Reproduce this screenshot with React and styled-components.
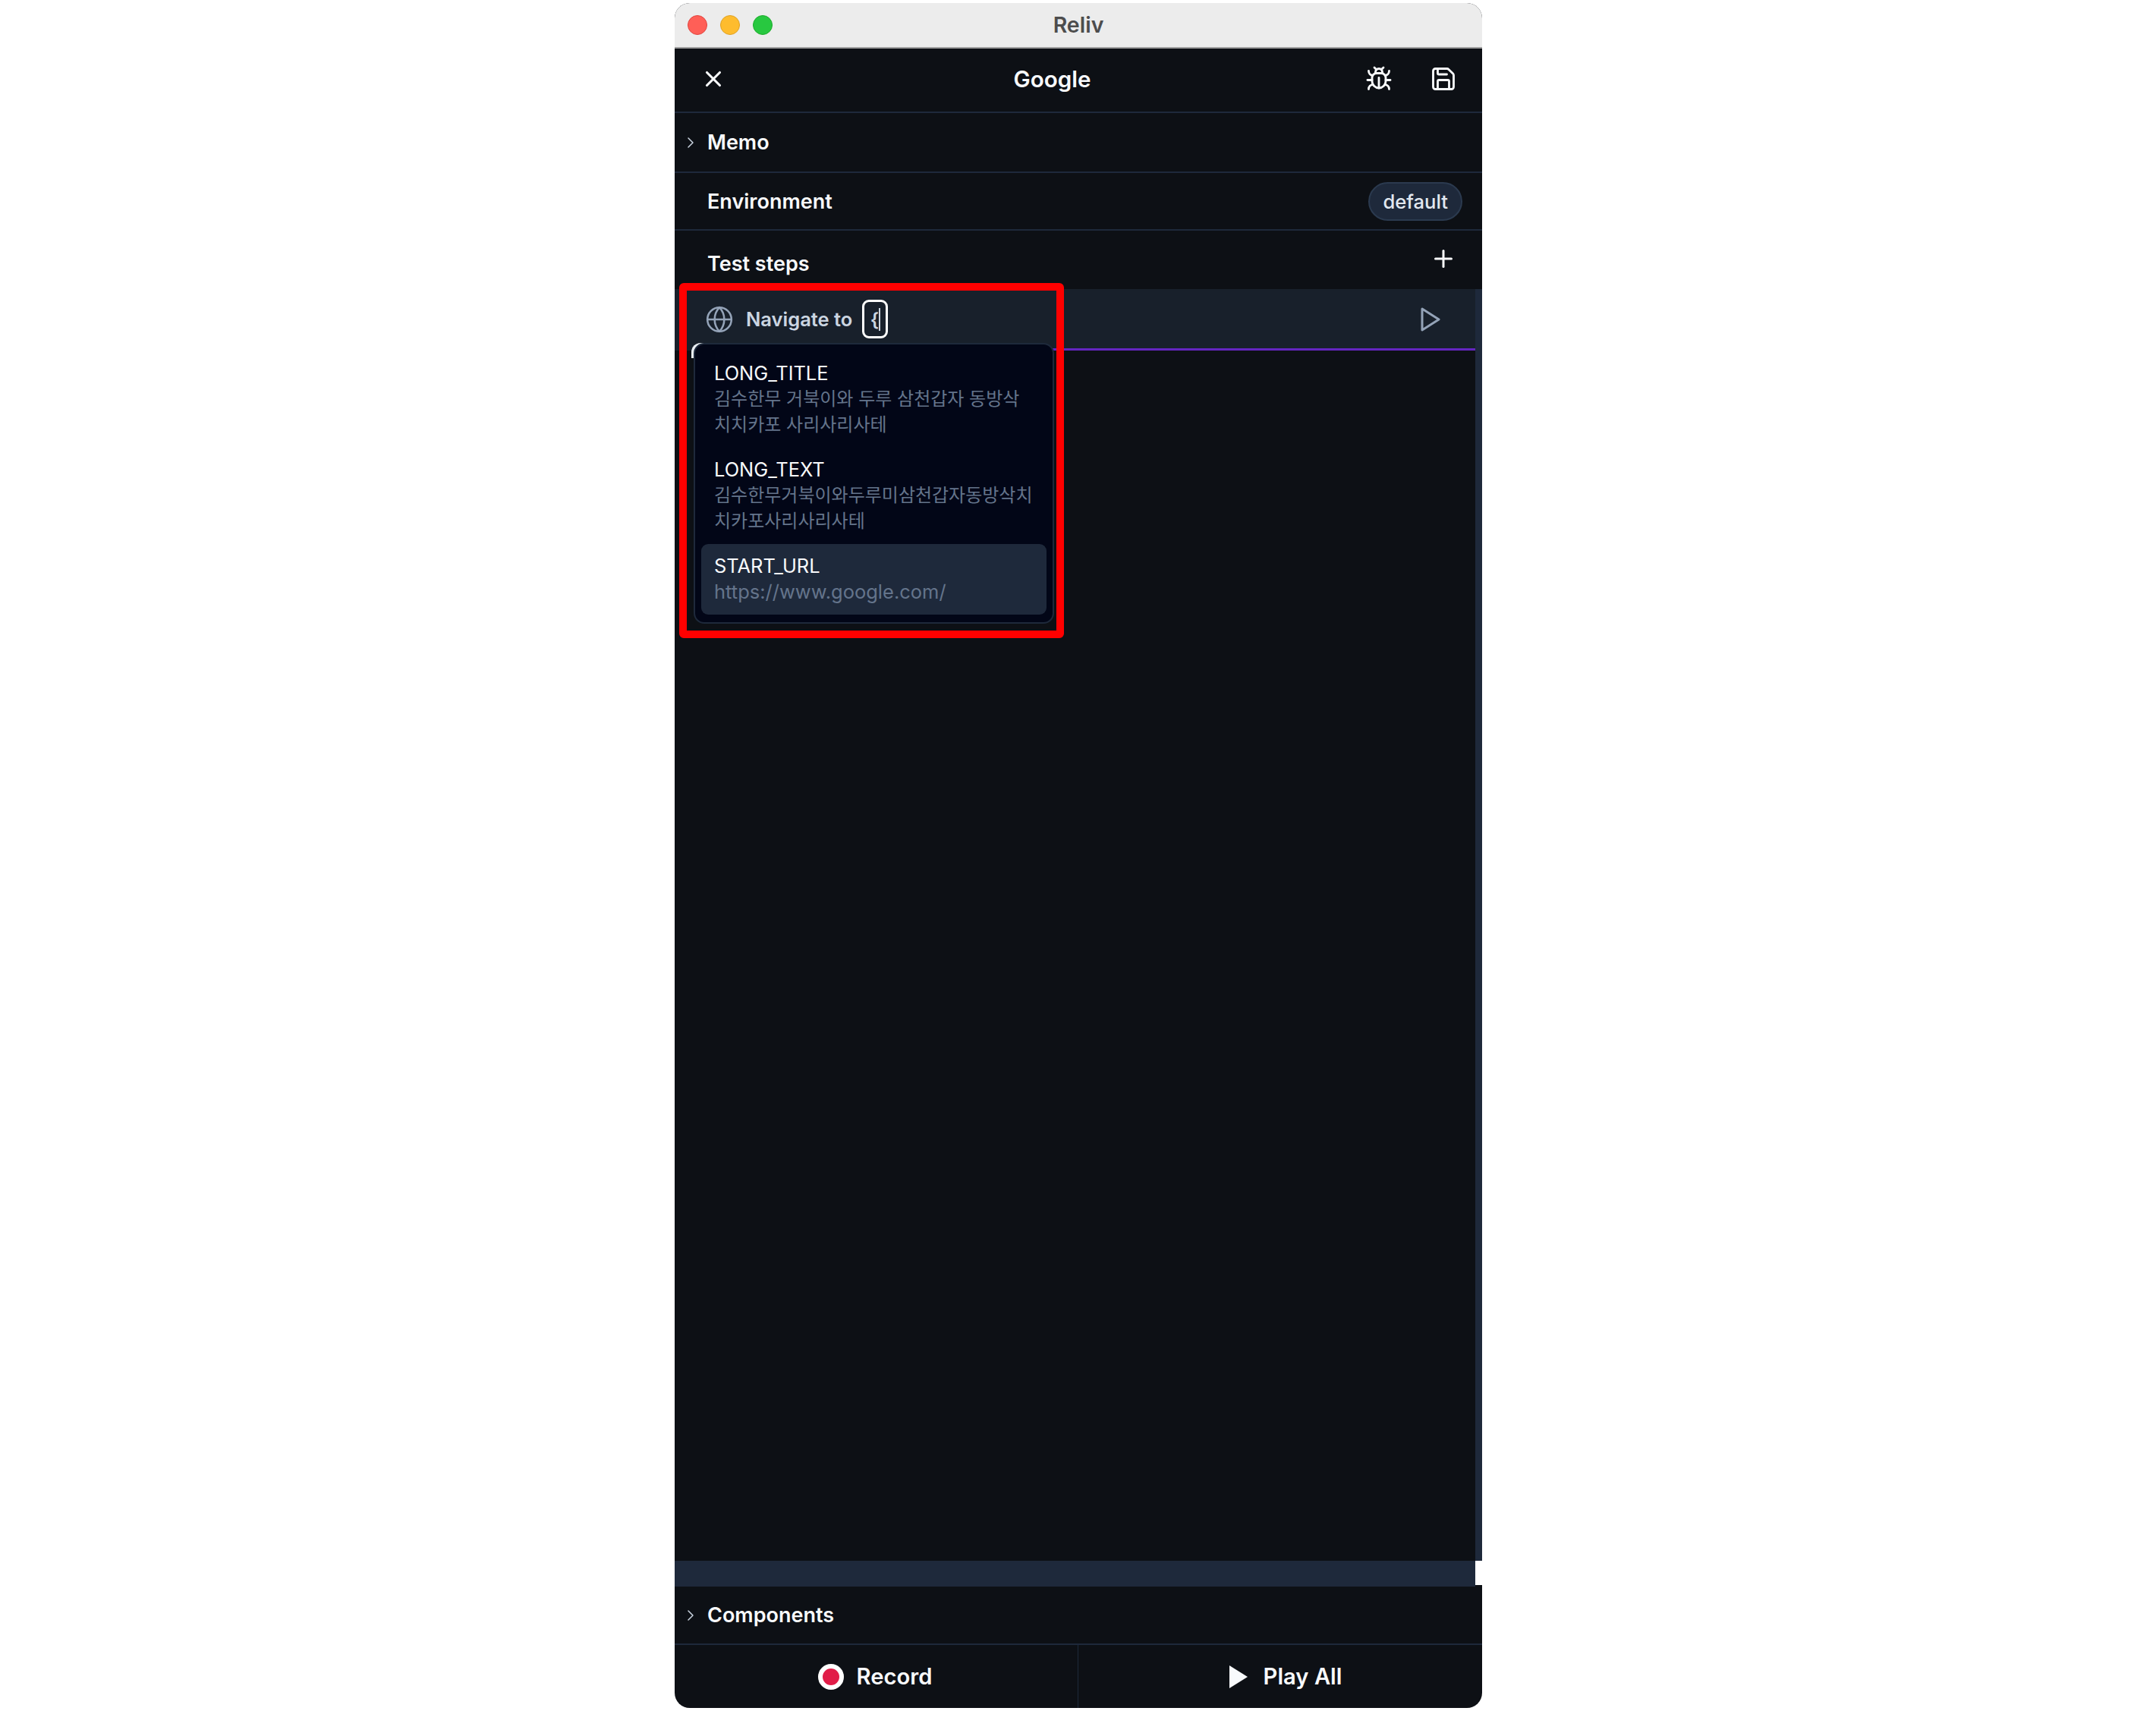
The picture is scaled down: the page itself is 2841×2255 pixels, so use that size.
import React from 'react';
import styled, { createGlobalStyle } from 'styled-components';
import { Bug, ChevronRight, Globe, Plus, Save, X } from 'lucide-react';

const GlobalStyle = createGlobalStyle`
  html, body {
    margin: 0;
    padding: 0;
    background: #fff;
  }
  * {
    box-sizing: border-box;
  }
`;

const Page = styled.div`
  padding: 4px 0 0 889px;
  width: 2841px;
  height: 2255px;
  overflow: hidden;
`;
const Window = styled.div`
  position: relative;
  display: flex;
  flex-direction: column;
  width: 1064px;
  height: 2247px;
  border-radius: 20px;
  overflow: hidden;
  background: #0d1015;
  font-family: Inter, "Noto Sans CJK KR", sans-serif;
  color: #f8fafc;
`;
const TitleBar = styled.div`
  position: relative;
  display: flex;
  align-items: center;
  gap: 17px;
  height: 60px;
  padding: 0 0 1px 17px;
  background: #ececec;
  border-bottom: 2px solid #9f9f9f;
`;
const Light = styled.span`
  width: 26px;
  height: 26px;
  border-radius: 50%;
  background: ${props => props.color};
  border: 1px solid ${props => props.edge};
`;
const WindowTitle = styled.div`
  flex: 1;
  text-align: center;
  padding-right: 146px;
  font-size: 28.5px;
  font-weight: 600;
  color: #4d4d4d;
`;
const Header = styled.div`
  display: flex;
  align-items: center;
  height: 85px;
  padding: 0 19px 3px 15px;
  border-bottom: 2px solid #1e293b;
`;
const IconButton = styled.div`
  display: flex;
  align-items: center;
  justify-content: center;
  flex: none;
  width: ${props => props.size || 64}px;
  height: 60px;
  color: #f8fafc;
`;
const HeaderTitle = styled.div`
  flex: 1;
  text-align: center;
  padding-left: 12px;
  font-size: 29.6px;
  font-weight: 600;
`;
const HeaderActions = styled.div`
  display: flex;
  gap: 21px;
`;
const Section = styled.div`
  display: flex;
  align-items: center;
  height: ${props => props.height}px;
  padding: 0 26px 0 43px;
  border-bottom: ${props => (props.plain ? 'none' : '2px solid #1e293b')};
  font-size: 27px;
  font-weight: 600;
`;
const SectionChevron = styled(ChevronRight)`
  position: absolute;
  left: 9px;
  color: #cbd5e1;
`;
const Collapsible = styled(Section)`
  position: relative;
`;
const SectionLabel = styled.div`
  flex: 1;
`;
const Pill = styled.div`
  display: flex;
  align-items: center;
  height: 51px;
  padding: 0 17px;
  border-radius: 26px;
  background: #1e293b;
  border: 2px solid #2b3a4f;
  font-size: 25.6px;
  font-weight: 550;
  color: #e2e8f0;
`;
const TestStepsHead = styled(Section)`
  padding-right: 33px;
  padding-top: 10px;
`;
const PlusIcon = styled(Plus)`
  margin-top: -13px;
`;
const Canvas = styled.div`
  display: flex;
  flex: 1;
  min-height: 0;
`;
const Steps = styled.div`
  flex: 1;
  position: relative;
`;
const ScrollTrack = styled.div`
  width: 9px;
  background: #1e293b;
`;
const StepRow = styled.div`
  position: relative;
  display: flex;
  align-items: center;
  height: 81px;
  padding: 0 45px 2px 40px;
  background: #18202b;

  &::after {
    content: '';
    position: absolute;
    left: 25px;
    right: 0;
    bottom: 0;
    height: 3px;
    background: #6425c0;
  }
`;
const StepGlobe = styled(Globe)`
  margin-right: 16px;
  flex: none;
  color: #94a3b8;
`;
const StepLabel = styled.div`
  margin-right: 13px;
  font-size: 25.5px;
  font-weight: 600;
  color: #cbd5e1;
`;
const VariableChip = styled.div`
  display: flex;
  align-items: center;
  justify-content: center;
  width: 34px;
  height: 51px;
  border: 3.5px solid #fff;
  border-radius: 9px;
  font-size: 25px;
  font-weight: 600;
  color: #cbd5e1;
`;
const Caret = styled.span`
  width: 2px;
  height: 30px;
  background: #cbd5e1;
`;
const StepSpacer = styled.div`
  flex: 1;
`;
const StepPlay = styled.svg`
  width: 26px;
  height: 32px;
  margin-right: 1px;
  fill: none;
  stroke: #94a3b8;
  stroke-width: 3;
  stroke-linejoin: round;
`;
const FocusCorner = styled.div`
  position: absolute;
  left: 22px;
  top: 71px;
  width: 16px;
  height: 20px;
  border-left: 4px solid #e8edf2;
  border-top: 4px solid #e8edf2;
  border-top-left-radius: 12px;
`;
const Dropdown = styled.div`
  position: absolute;
  left: 25px;
  top: 71px;
  width: 475px;
  height: 370px;
  padding: 9px 8px;
  background: #020617;
  border: 2px solid #1e293b;
  border-radius: 14px;
`;
const Option = styled.div`
  padding: 12px 17px 13px;
  border-radius: 9px;
  background: ${props => (props.selected ? '#1e293b' : 'transparent')};
  line-height: 34px;
  font-size: 25.4px;
`;
const OptionName = styled.div`
  color: #f8fafc;
`;
const OptionValue = styled.div`
  color: #64748b;
  font-size: ${props => (props.korean ? '24px' : '25.5px')};
  word-break: ${props => props.wrap};
`;
const HorizontalScroll = styled.div`
  display: flex;
  flex: none;
  height: 34px;
`;
const HorizontalTrack = styled.div`
  flex: 1;
  background: #1e293b;
`;
const ScrollCorner = styled.div`
  width: 9px;
  height: 32px;
  background: #fff;
`;
const Footer = styled.div`
  display: grid;
  grid-template-columns: 531px 1fr;
  flex: none;
  height: 83px;
`;
const FooterButton = styled.div`
  display: flex;
  align-items: center;
  justify-content: center;
  gap: ${props => props.gap}px;
  padding: ${props => props.pad};
  border-left: ${props => (props.divided ? '1px solid #1e293b' : 'none')};
  font-size: 29.2px;
  font-weight: 600;
`;
const RecordDot = styled.span`
  width: 34px;
  height: 34px;
  border-radius: 50%;
  background: #e11d48;
  border: 6px solid #fff;
`;
const PlayGlyph = styled.svg`
  width: 24px;
  height: 30px;
  fill: #f8fafc;
`;
const Highlight = styled.div`
  position: absolute;
  left: 6px;
  top: 369px;
  width: 507px;
  height: 468px;
  border: 10px solid #ff0000;
  border-radius: 6px;
  pointer-events: none;
`;

const options = [
  { name: 'LONG_TITLE', value: '김수한무 거북이와 두루 삼천갑자 동방삭 치치카포 사리사리사테', korean: true, wrap: 'keep-all' },
  { name: 'LONG_TEXT', value: '김수한무거북이와두루미삼천갑자동방삭치치카포사리사리사테', korean: true, wrap: 'break-all' },
  { name: 'START_URL', value: 'https://www.google.com/', wrap: 'normal', selected: true },
];

export default function App() {
  return (
    <Page>
      <GlobalStyle />
      <Window>
        <TitleBar>
          <Light color="#ff5f57" edge="#e0443e" />
          <Light color="#febc2e" edge="#dea123" />
          <Light color="#28c840" edge="#1aab29" />
          <WindowTitle>Reliv</WindowTitle>
        </TitleBar>
        <Header>
          <IconButton size={72}><X size={34} strokeWidth={2.2} /></IconButton>
          <HeaderTitle>Google</HeaderTitle>
          <HeaderActions>
            <IconButton><Bug size={36} strokeWidth={1.9} /></IconButton>
            <IconButton><Save size={36} strokeWidth={1.9} /></IconButton>
          </HeaderActions>
        </Header>
        <Collapsible height={79}>
          <SectionChevron size={24} strokeWidth={1.5} />
          <SectionLabel>Memo</SectionLabel>
        </Collapsible>
        <Section height={76}>
          <SectionLabel>Environment</SectionLabel>
          <Pill>default</Pill>
        </Section>
        <TestStepsHead height={77} plain>
          <SectionLabel>Test steps</SectionLabel>
          <PlusIcon size={36} strokeWidth={2} />
        </TestStepsHead>
        <Canvas>
          <Steps>
            <StepRow>
              <StepGlobe size={38} strokeWidth={1.6} />
              <StepLabel>Navigate to</StepLabel>
              <VariableChip>{'{'}<Caret /></VariableChip>
              <StepSpacer />
              <StepPlay viewBox="0 0 26 32"><polygon points="2,2 24,16 2,30" /></StepPlay>
            </StepRow>
            <FocusCorner />
            <Dropdown>
              {options.map(option => (
                <Option key={option.name} selected={option.selected}>
                  <OptionName>{option.name}</OptionName>
                  <OptionValue korean={option.korean} wrap={option.wrap}>{option.value}</OptionValue>
                </Option>
              ))}
            </Dropdown>
          </Steps>
          <ScrollTrack />
        </Canvas>
        <HorizontalScroll>
          <HorizontalTrack />
          <ScrollCorner />
        </HorizontalScroll>
        <Collapsible height={77}>
          <SectionChevron size={24} strokeWidth={1.5} />
          <SectionLabel>Components</SectionLabel>
        </Collapsible>
        <Footer>
          <FooterButton gap={17} pad="0 3px 0 0">
            <RecordDot />
            Record
          </FooterButton>
          <FooterButton divided gap={21} pad="0 0 0 14px">
            <PlayGlyph viewBox="0 0 24 30"><polygon points="0,0 24,15 0,30" /></PlayGlyph>
            Play All
          </FooterButton>
        </Footer>
        <Highlight />
      </Window>
    </Page>
  );
}
